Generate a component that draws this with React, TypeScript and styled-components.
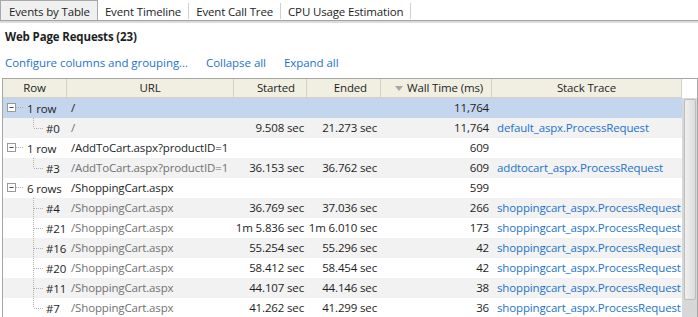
import React from "react";
import styled, { createGlobalStyle } from "styled-components";

const Global = createGlobalStyle`
  html, body { margin: 0; padding: 0; background: #fff; }
  body { font-family: "Segoe UI", "Open Sans", "Noto Sans", sans-serif; font-size: 11.5px; letter-spacing: -0.15px; color: #1e1e1e; }
  * { box-sizing: border-box; }
`;

const Page = styled.div`
  width: 698px;
  height: 317px;
  overflow: hidden;
  display: flex;
  flex-direction: column;
`;

const TabBar = styled.div`
  display: flex;
  align-items: flex-end;
  height: 21px;
  border-bottom: 1px solid #a3a3a3;
  box-shadow: 0 2px 0 #dcdcdc;
`;

const Tab = styled.div<{ $active?: boolean }>`
  height: ${(p) => (p.$active ? "20px" : "16px")};
  margin-bottom: ${(p) => (p.$active ? "0" : "1px")};
  display: flex;
  align-items: center;
  padding: ${(p) => (p.$active ? "3px 7px 0 8px" : "1px 7px 0 7px")};
  background: ${(p) => (p.$active ? "#f0f0f0" : "transparent")};
  border: ${(p) => (p.$active ? "1px solid #a8a8a8" : "none")};
  border-bottom: none;
  border-right: ${(p) => (p.$active ? "1px solid #a8a8a8" : "1px solid #cfcfcf")};
  white-space: nowrap;
  line-height: 16px;
`;

const Title = styled.div`
  margin: 8px 0 0 5px;
  font-weight: bold;
  line-height: 16px;
`;

const Links = styled.div`
  display: flex;
  gap: 18px;
  margin: 10px 0 0 5px;
  line-height: 16px;
  letter-spacing: -0.05px;
`;

const Link = styled.span`
  color: #1c73cf;
`;

const Table = styled.div`
  margin: 7px 0 0 2px;
  width: 696px;
  border: 1px solid #a6a6a6;
  border-bottom: none;
  flex: 1;
  display: flex;
  flex-direction: column;
  min-height: 0;
`;

const COLS = "64px 167px 73px 74px 111px 190px";

const HeaderRow = styled.div`
  display: grid;
  grid-template-columns: ${COLS} 15px;
  height: 19px;
`;

const HeadCell = styled.div<{ $align?: string; $pad?: number; $blank?: boolean }>`
  background: ${(p) => (p.$blank ? "#fff" : "#f1efe2")};
  border-right: ${(p) => (p.$blank ? "none" : "1px solid #d4d2c6")};
  border-bottom: ${(p) => (p.$blank ? "none" : "1px solid #d4d2c6")};
  display: flex;
  align-items: center;
  justify-content: ${(p) => p.$align || "center"};
  padding-right: ${(p) => p.$pad ?? 0}px;
  line-height: 16px;
  white-space: nowrap;
`;

const SortArrow = styled.span`
  width: 0;
  height: 0;
  border-left: 4.5px solid transparent;
  border-right: 4.5px solid transparent;
  border-top: 5px solid #a7a7a7;
  margin-right: 4px;
  margin-top: 1px;
`;

const Body = styled.div`
  display: flex;
  flex: 1;
  min-height: 0;
`;

const Rows = styled.div`
  width: 679px;
  display: flex;
  flex-direction: column;
`;

const Row = styled.div<{ $bg: string }>`
  display: grid;
  grid-template-columns: ${COLS};
  height: 20px;
  background: ${(p) => p.$bg};
  flex-shrink: 0;
`;

const Cell = styled.div<{ $align?: string; $color?: string; $padL?: number; $padR?: number }>`
  display: flex;
  align-items: center;
  justify-content: ${(p) => p.$align || "flex-start"};
  padding-left: ${(p) => p.$padL ?? 0}px;
  padding-right: ${(p) => p.$padR ?? 0}px;
  color: ${(p) => p.$color || "#1e1e1e"};
  white-space: nowrap;
  overflow: hidden;
  line-height: 16px;
`;

const TreeCell = styled.div`
  display: flex;
  align-items: center;
  white-space: nowrap;
  height: 20px;
`;

const Scrollbar = styled.div`
  width: 15px;
  padding: 1px 1px 0 2px;
  background-color: #f7f7f7;
  background-image: radial-gradient(#d6d6d6 0.7px, transparent 0.9px);
  background-size: 2px 2px;
  display: flex;
  flex-direction: column;
`;

const Thumb = styled.div`
  height: 201px;
  border: 1px solid #bdbdbd;
  border-radius: 2px;
  background: linear-gradient(to right, #f0f0f0, #dcdcdc);
`;

type Item = {
  kind: "group" | "child";
  row: string;
  url: string;
  started?: string;
  ended?: string;
  wall: string;
  stack?: string;
  last?: boolean;
};

const items: Item[] = [
  { kind: "group", row: "1 row", url: "/", wall: "11,764" },
  { kind: "child", row: "#0", url: "/", started: "9.508 sec", ended: "21.273 sec", wall: "11,764", stack: "default_aspx.ProcessRequest", last: true },
  { kind: "group", row: "1 row", url: "/AddToCart.aspx?productID=1", wall: "609" },
  { kind: "child", row: "#3", url: "/AddToCart.aspx?productID=1", started: "36.153 sec", ended: "36.762 sec", wall: "609", stack: "addtocart_aspx.ProcessRequest", last: true },
  { kind: "group", row: "6 rows", url: "/ShoppingCart.aspx", wall: "599" },
  { kind: "child", row: "#4", url: "/ShoppingCart.aspx", started: "36.769 sec", ended: "37.036 sec", wall: "266", stack: "shoppingcart_aspx.ProcessRequest" },
  { kind: "child", row: "#21", url: "/ShoppingCart.aspx", started: "1m 5.836 sec", ended: "1m 6.010 sec", wall: "173", stack: "shoppingcart_aspx.ProcessRequest" },
  { kind: "child", row: "#16", url: "/ShoppingCart.aspx", started: "55.254 sec", ended: "55.296 sec", wall: "42", stack: "shoppingcart_aspx.ProcessRequest" },
  { kind: "child", row: "#20", url: "/ShoppingCart.aspx", started: "58.412 sec", ended: "58.454 sec", wall: "42", stack: "shoppingcart_aspx.ProcessRequest" },
  { kind: "child", row: "#11", url: "/ShoppingCart.aspx", started: "44.107 sec", ended: "44.146 sec", wall: "38", stack: "shoppingcart_aspx.ProcessRequest" },
  { kind: "child", row: "#7", url: "/ShoppingCart.aspx", started: "41.262 sec", ended: "41.299 sec", wall: "36", stack: "shoppingcart_aspx.ProcessRequest", last: true },
];

const GroupGlyph = () => (
  <svg width="24" height="20" viewBox="0 0 24 20" style={{ flexShrink: 0 }}>
    <rect x="4.5" y="5.5" width="8" height="8" fill="#fff" stroke="#9a9a9a" />
    <line x1="6.5" y1="9.5" x2="10.5" y2="9.5" stroke="#444" />
    <line x1="13" y1="9.5" x2="21" y2="9.5" stroke="#b0b0b0" strokeDasharray="1 1" />
  </svg>
);

const ChildGlyph = ({ last }: { last?: boolean }) => (
  <svg width="43" height="20" viewBox="0 0 43 20" style={{ flexShrink: 0 }}>
    <line x1="30.5" y1="0" x2="30.5" y2={last ? "10" : "20"} stroke="#b0b0b0" strokeDasharray="1 1" />
    <line x1="31" y1="10.5" x2="40" y2="10.5" stroke="#b0b0b0" strokeDasharray="1 1" />
  </svg>
);

export default function App() {
  return (
    <Page>
      <Global />
      <TabBar>
        <Tab $active>Events by Table</Tab>
        <Tab>Event Timeline</Tab>
        <Tab>Event Call Tree</Tab>
        <Tab>CPU Usage Estimation</Tab>
      </TabBar>
      <Title>Web Page Requests (23)</Title>
      <Links>
        <Link>Configure columns and grouping...</Link>
        <Link>Collapse all</Link>
        <Link>Expand all</Link>
      </Links>
      <Table>
        <HeaderRow>
          <HeadCell>Row</HeadCell>
          <HeadCell>URL</HeadCell>
          <HeadCell $align="flex-end" $pad={11}>Started</HeadCell>
          <HeadCell $align="flex-end" $pad={13}>Ended</HeadCell>
          <HeadCell $align="flex-end" $pad={8}>
            <SortArrow />
            Wall Time (ms)
          </HeadCell>
          <HeadCell>Stack Trace</HeadCell>
          <HeadCell $blank />
        </HeaderRow>
        <Body>
          <Rows>
            {items.map((it, i) => {
              const bg = i === 0 ? "#c4d5ee" : i % 2 === 1 ? "#f2f2f2" : "#ffffff";
              const isChild = it.kind === "child";
              return (
                <Row key={i} $bg={bg}>
                  <TreeCell>
                    {isChild ? <ChildGlyph last={it.last} /> : <GroupGlyph />}
                    {it.row}
                  </TreeCell>
                  <Cell $padL={4} $color={isChild ? "#717171" : "#1e1e1e"}>{it.url}</Cell>
                  <Cell $align="flex-end" $padR={3}>{it.started}</Cell>
                  <Cell $align="flex-end" $padR={4}>{it.ended}</Cell>
                  <Cell $align="flex-end" $padR={3}>{it.wall}</Cell>
                  <Cell $padL={5} $color="#1c73cf">{it.stack}</Cell>
                </Row>
              );
            })}
          </Rows>
          <Scrollbar>
            <Thumb />
          </Scrollbar>
        </Body>
      </Table>
    </Page>
  );
}
